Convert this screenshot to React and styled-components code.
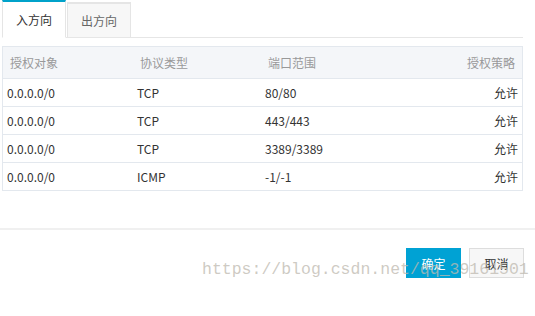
import styled, { createGlobalStyle } from "styled-components";

const GlobalStyle = createGlobalStyle`
  body {
    margin: 0;
    background: #fff;
    font-family: "Noto Sans CJK SC", "Noto Sans", sans-serif;
    font-size: 12px;
    color: #333;
  }
`;

const Page = styled.div`
  position: relative;
  width: 535px;
  height: 316px;
  overflow: hidden;
`;

const Content = styled.div`
  padding: 0 12px 0 2px;
`;

const Tabs = styled.div`
  display: flex;
  height: 38px;
  border-bottom: 1px solid #e6e6e6;
  box-sizing: border-box;
`;

const Tab = styled.div`
  width: 64px;
  box-sizing: border-box;
  display: flex;
  align-items: center;
  justify-content: center;
  font-size: 12px;
  color: ${(p) => (p.$active ? "#333" : "#666")};
  background: ${(p) => (p.$active ? "#fff" : "#f7f7f7")};
  border: 1px solid #e5e5e5;
  border-top: 2px solid ${(p) => (p.$active ? "#00a2ca" : "#e5e5e5")};
  border-bottom: ${(p) => (p.$active ? "1px solid #fff" : "none")};
  margin-bottom: ${(p) => (p.$active ? "-1px" : "0")};
  margin-top: ${(p) => (p.$active ? "0" : "2px")};
  & + & {
    margin-left: 1px;
    border-left: 1px solid #e5e5e5;
  }
`;

const Table = styled.div`
  margin-top: 8px;
  border: 1px solid #e3e8ee;
`;

const Row = styled.div`
  display: grid;
  grid-template-columns: 130px 128px 1fr auto;
  align-items: center;
  height: ${(p) => (p.$head ? "31px" : "27px")};
  padding: 0 ${(p) => (p.$head ? "7px" : "4px")};
  background: ${(p) => (p.$head ? "#f4f6f9" : "#fff")};
  color: ${(p) => (p.$head ? "#999" : "#333")};
  & + & {
    border-top: 1px solid #e3e8ee;
  }
`;

const Cell = styled.div`
  text-align: ${(p) => (p.$right ? "right" : "left")};
  white-space: nowrap;
`;

const Divider = styled.div`
  margin-top: 37px;
  height: 2px;
  background: #f0f0f0;
`;

const Footer = styled.div`
  display: flex;
  justify-content: flex-end;
  gap: 8px;
  padding: 18px 11px 0 0;
`;

const Button = styled.button`
  width: 55px;
  height: 30px;
  box-sizing: border-box;
  font-family: inherit;
  font-size: 12px;
  padding: 0;
  border: 1px solid ${(p) => (p.$primary ? "#00a2d4" : "#ddd")};
  background: ${(p) => (p.$primary ? "#00a2d4" : "#f7f7f7")};
  color: ${(p) => (p.$primary ? "#fff" : "#333")};
`;

const Watermark = styled.div`
  position: absolute;
  left: 202px;
  top: 260px;
  font-family: "Liberation Mono", monospace;
  font-size: 16.5px;
  color: rgba(190, 185, 175, 0.75);
  pointer-events: none;
  white-space: nowrap;
`;

const rules = [
  ["0.0.0.0/0", "TCP", "80/80", "允许"],
  ["0.0.0.0/0", "TCP", "443/443", "允许"],
  ["0.0.0.0/0", "TCP", "3389/3389", "允许"],
  ["0.0.0.0/0", "ICMP", "-1/-1", "允许"],
];

export default function App() {
  return (
    <Page>
      <GlobalStyle />
      <Content>
        <Tabs>
          <Tab $active>入方向</Tab>
          <Tab>出方向</Tab>
        </Tabs>
        <Table>
          <Row $head>
            <Cell>授权对象</Cell>
            <Cell>协议类型</Cell>
            <Cell>端口范围</Cell>
            <Cell $right>授权策略</Cell>
          </Row>
          {rules.map((r, i) => (
            <Row key={i}>
              <Cell>{r[0]}</Cell>
              <Cell>{r[1]}</Cell>
              <Cell>{r[2]}</Cell>
              <Cell $right>{r[3]}</Cell>
            </Row>
          ))}
        </Table>
      </Content>
      <Divider />
      <Footer>
        <Button $primary>确定</Button>
        <Button>取消</Button>
      </Footer>
      <Watermark>https://blog.csdn.net/qq_39161501</Watermark>
    </Page>
  );
}
